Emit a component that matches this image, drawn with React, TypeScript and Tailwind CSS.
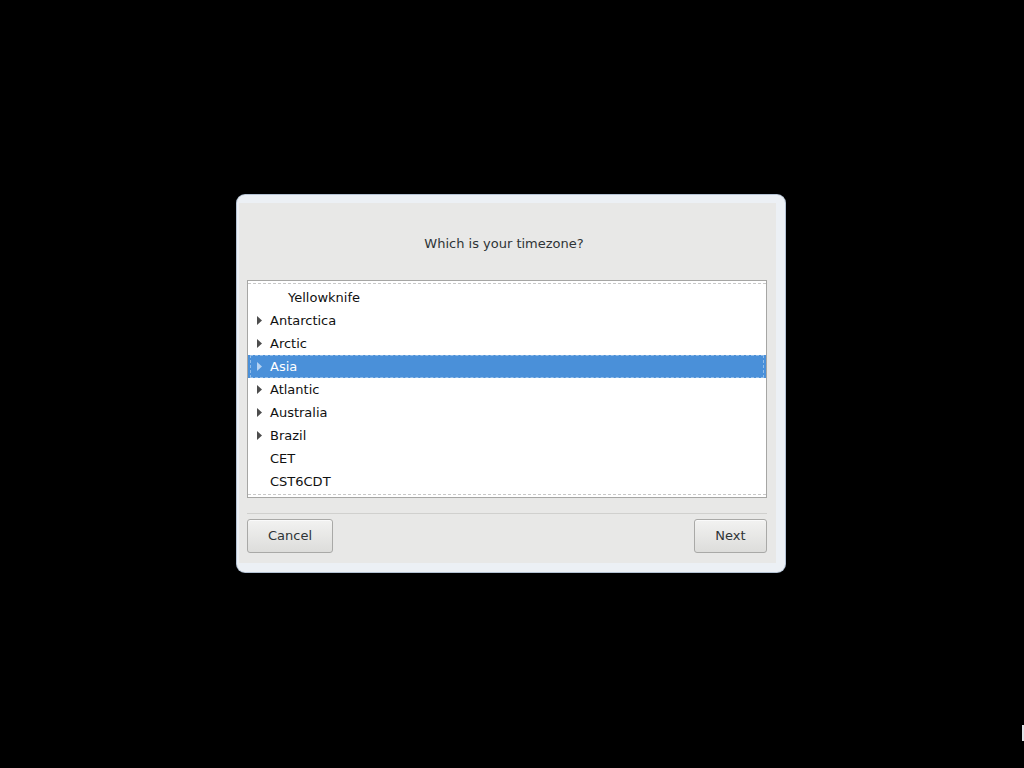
const zones = [
  { name: 'Yellowknife', child: true },
  { name: 'Antarctica', group: true },
  { name: 'Arctic', group: true },
  { name: 'Asia', group: true, selected: true },
  { name: 'Atlantic', group: true },
  { name: 'Australia', group: true },
  { name: 'Brazil', group: true },
  { name: 'CET' },
  { name: 'CST6CDT' },
]

function Expander({ light }: { light?: boolean }) {
  return (
    <svg width="6" height="9" viewBox="0 0 6 9" className="block">
      <polygon points="0,0 5,4.5 0,9" fill={light ? '#b7d3f2' : '#4d4d4d'} />
    </svg>
  )
}

function Row({ name, group, child, selected }: { name: string; group?: boolean; child?: boolean; selected?: boolean }) {
  return (
    <div className={`h-[23px] flex items-center ${selected ? 'bg-[#4a90d9] text-white' : 'text-[#111111]'}`}>
      <div
        className={`flex-1 h-full mx-[2px] flex items-center ${selected ? 'border border-dashed border-[#92bde9]' : 'border border-transparent'}`}
      >
        <div className="w-[19px] pl-[6px] flex items-center">{group && <Expander light={selected} />}</div>
        <span className={child ? 'pl-[18px]' : ''}>{name}</span>
      </div>
    </div>
  )
}

function Button({ label, w }: { label: string; w: string }) {
  return (
    <button
      className={`${w} h-[34px] rounded-[3px] border border-[#a9a9a7] bg-gradient-to-b from-[#f2f2f1] to-[#dddddb] text-[#2e3436] text-[13px] shadow-[inset_0_1px_0_#fafafa]`}
    >
      {label}
    </button>
  )
}

export default function App() {
  return (
    <div className="relative w-[1024px] h-[768px] bg-black pl-[237px] pt-[195px] overflow-hidden" style={{ fontFamily: '"DejaVu Sans", sans-serif' }}>
      <div className="w-[548px] h-[377px] rounded-[8px] bg-[#ecf0f5] ring-1 ring-[#b4c2d3] pl-[2px] pt-[8px] pr-[9px] pb-[9px]">
        <div className="h-[360px] bg-[#e8e8e7] flex flex-col pl-[8px] pr-[9px]">
          <div className="h-[77px] pt-[33px] pr-[6px] text-center text-[13px] leading-[16px] text-[#2e3436]">
            Which is your timezone?
          </div>
          <div className="h-[218px] border border-[#a6a6a4] bg-white pt-[2px] text-[13px]">
            <div className="h-[212px] border-y border-dashed border-[#c8c8c8] pt-[2px] overflow-hidden">
              {zones.map((z) => (
                <Row key={z.name} {...z} />
              ))}
            </div>
          </div>
          <div className="mt-[15px] border-t border-[#d0d0ce]" />
          <div className="mt-[5px] flex justify-between">
            <Button label="Cancel" w="w-[86px]" />
            <Button label="Next" w="w-[73px]" />
          </div>
        </div>
      </div>
      <div className="absolute left-[1022px] top-[725px] w-[2px] h-[16px] bg-[#dfe3e6]" />
    </div>
  )
}
